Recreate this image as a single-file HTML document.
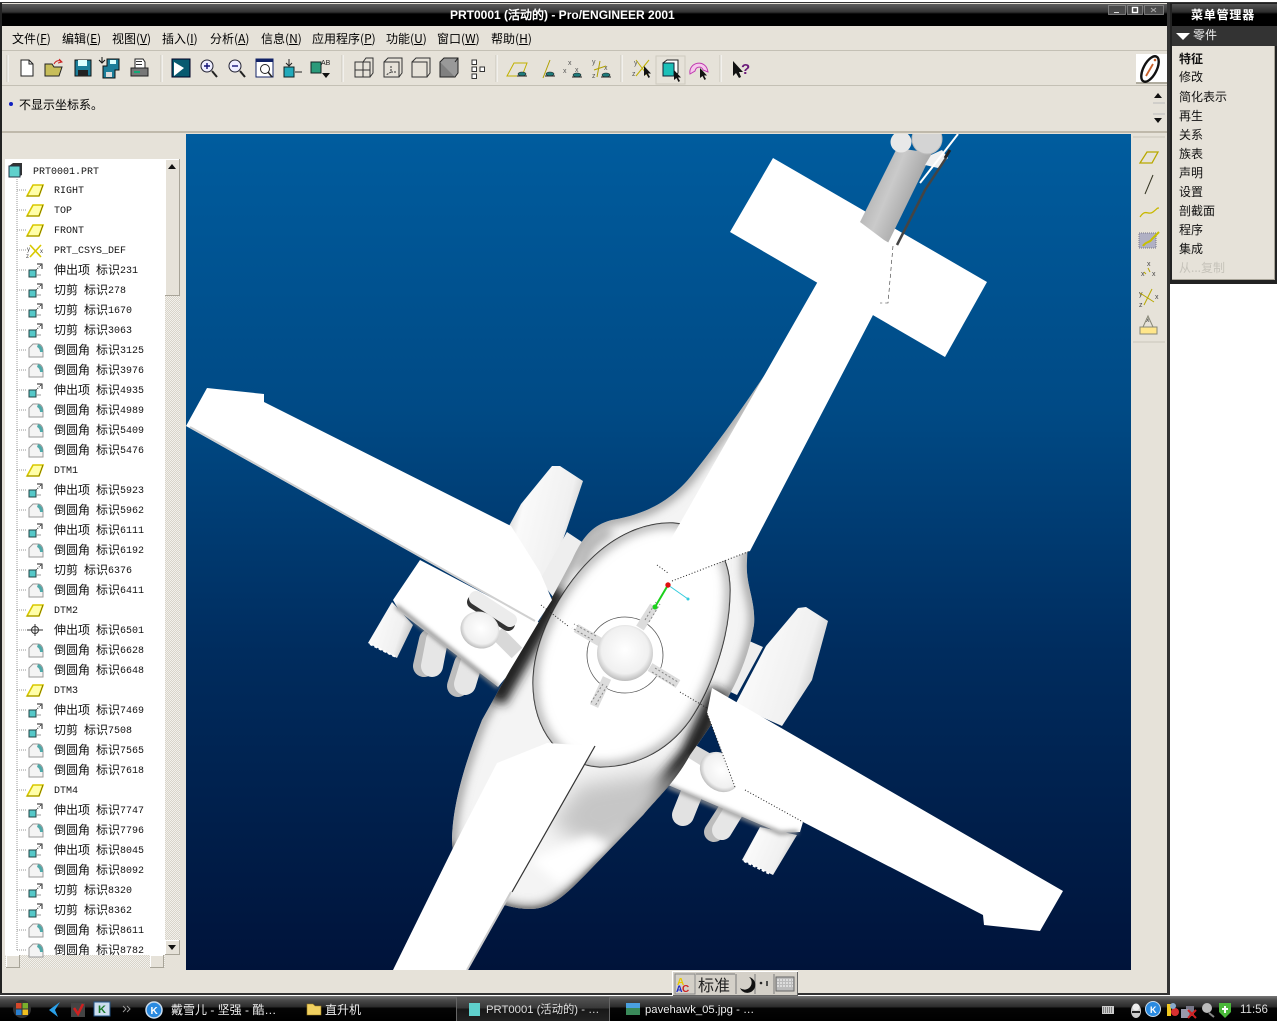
<!DOCTYPE html>
<html><head><meta charset="utf-8"><style>
html,body{margin:0;padding:0;background:#fff}
#p{position:relative;width:1277px;height:1021px;overflow:hidden;background:#fff;font-family:"WenQuanYi Zen Hei","Noto Sans CJK SC",sans-serif;font-size:12px;color:#000}
.a{position:absolute;white-space:nowrap;line-height:14px}
.a u{text-decoration:underline}
#tree{position:absolute;left:5px;top:159px;width:160px;height:796px;background:#fff;overflow:hidden}
.r{position:absolute;left:49px;height:20px;line-height:20px;white-space:nowrap;color:#111}
.r i{font:10px/20px "Liberation Mono",monospace;color:#111;position:relative;top:-1px;font-style:normal}
.m{position:absolute;left:1179px;line-height:14px;color:#111}
.w{color:#fff}
.l{font-family:"Liberation Sans","WenQuanYi Zen Hei",sans-serif}
</style></head><body><div id="p">
<div style="position:absolute;left:0;top:0;width:1277px;height:3px;background:#fff;border-bottom:1px solid #333;box-sizing:border-box"></div>
<div style="position:absolute;left:0;top:3px;width:1170px;height:993px;background:#e6e2d9"></div>
<div style="position:absolute;left:0;top:3px;width:2px;height:991px;background:#222"></div>
<div style="position:absolute;left:1167px;top:3px;width:3px;height:991px;background:#333"></div>
<div style="position:absolute;left:0;top:993px;width:1170px;height:2px;background:#333"></div>
<div style="position:absolute;left:2px;top:4px;width:1165px;height:22px;background:linear-gradient(#5e5e5e 0,#343434 8px,#000 10px,#000 100%)"></div>
<div class="a l w" style="left:450px;top:8px;font-weight:bold;font-size:12px">PRT0001 (活动的) - Pro/ENGINEER 2001</div>
<div style="position:absolute;left:2px;top:50px;width:1165px;height:1px;background:#c4c0b5"></div>
<div style="position:absolute;left:2px;top:85px;width:1165px;height:1px;background:#c4c0b5"></div>
<div style="position:absolute;left:2px;top:131px;width:1165px;height:2px;background:#bfb9ab"></div>

<div class="a" style="left:12px;top:32px">文件(<u>F</u>)</div>
<div class="a" style="left:62px;top:32px">编辑(<u>E</u>)</div>
<div class="a" style="left:112px;top:32px">视图(<u>V</u>)</div>
<div class="a" style="left:162px;top:32px">插入(<u>I</u>)</div>
<div class="a" style="left:210px;top:32px">分析(<u>A</u>)</div>
<div class="a" style="left:261px;top:32px">信息(<u>N</u>)</div>
<div class="a" style="left:312px;top:32px">应用程序(<u>P</u>)</div>
<div class="a" style="left:386px;top:32px">功能(<u>U</u>)</div>
<div class="a" style="left:437px;top:32px">窗口(<u>W</u>)</div>
<div class="a" style="left:491px;top:32px">帮助(<u>H</u>)</div>
<div class="a" style="left:19px;top:98px">不显示坐标系。</div>

<!-- viewport -->
<svg style="position:absolute;left:186px;top:134px" width="945" height="836" viewBox="186 134 945 836">
<defs>
<linearGradient id="bg" x1="0" y1="0" x2="0" y2="1"><stop offset="0" stop-color="#005c9e"/><stop offset=".33" stop-color="#004a85"/><stop offset=".62" stop-color="#002c5e"/><stop offset="1" stop-color="#00133a"/></linearGradient>
<filter id="b2" x="-30%" y="-30%" width="160%" height="160%"><feGaussianBlur stdDeviation="2"/></filter>
<filter id="b5" x="-30%" y="-30%" width="160%" height="160%"><feGaussianBlur stdDeviation="5"/></filter>
<filter id="b9" x="-40%" y="-40%" width="180%" height="180%"><feGaussianBlur stdDeviation="10"/></filter>
<linearGradient id="eng" x1="0" y1="0" x2="1" y2=".4"><stop offset="0" stop-color="#b4b4b4"/><stop offset=".28" stop-color="#fafafa"/><stop offset=".8" stop-color="#f0f0f0"/><stop offset="1" stop-color="#c8c8c8"/></linearGradient>
<linearGradient id="shaft" x1="0" y1="0" x2="1" y2=".55"><stop offset="0" stop-color="#9a9a9a"/><stop offset=".5" stop-color="#cacaca"/><stop offset="1" stop-color="#909090"/></linearGradient>
<radialGradient id="ball" cx=".5" cy=".45" r=".6"><stop offset="0" stop-color="#fff"/><stop offset=".7" stop-color="#f0f0f0"/><stop offset="1" stop-color="#a8a8a8"/></radialGradient>
<path id="fus" d="M778 355C745 405 720 440 692 475C668 505 640 515 612 520C592 525 582 538 572 560L540 620L510 670L482 720C462 770 452 810 452 842C454 880 490 909 530 909C552 909 567 893 585 875L643 815C660 795 675 782 690 755C715 720 745 680 754 625C756 600 745 585 747 560C748 520 760 450 778 355Z"/>
<path id="ov" d="M673 523C705 525 730 550 730 590C730 640 710 690 690 720C665 755 630 767 600 767C560 765 533 730 533 683C533 640 560 590 590 560C615 535 645 522 673 523Z"/>
<clipPath id="fc"><use href="#fus"/></clipPath>
<clipPath id="oc"><use href="#ov"/></clipPath>
</defs>
<rect x="186" y="134" width="945" height="836" fill="url(#bg)"/>

<!-- tail shaft, strut -->
<polygon points="773,158 987,282 945,357 730,232" fill="#fff"/>
<polygon points="897,148 932,153 888,243 860,222" fill="url(#shaft)"/>
<circle cx="901" cy="142" r="10.500" fill="#e8e8e8"/>
<circle cx="927" cy="139" r="15" fill="#d4d4d4" stroke="#bbb"/>
<polygon points="931,155 942,150 948,158 938,168 925,165" fill="#f0f0f0"/>
<path d="M897 245L925 190L946 158" stroke="#444" stroke-width="2.500" fill="none"/>
<path d="M920 183L958 134" stroke="#fff" stroke-width="2" fill="none"/>
<path d="M945 158L950 150" stroke="#222" stroke-width="3"/>

<!-- left wing group -->
<polygon points="509,526 521,504 552,466 560,466 583,481 566,531 545,590" fill="url(#eng)"/>
<polygon points="567,532 582,542 553,597 540,580" fill="#eee"/>
<polygon points="392,602 413,625 397,658 368,643" fill="url(#eng)"/>
<g fill="none" stroke-linecap="round">
<path d="M430 640L424 666" stroke="#bdbdbd" stroke-width="22"/><path d="M437 640L432 666" stroke="#e6e6e6" stroke-width="22"/>
<path d="M465 664L458 686" stroke="#bdbdbd" stroke-width="22"/><path d="M471 664L465 684" stroke="#e6e6e6" stroke-width="22"/>
</g>
<polygon points="420,560 393,600 400,612 498,687 512,670 540,623" fill="#fff"/>
<path d="M396 606L498 687" stroke="#8a8a8a" stroke-width="4" filter="url(#b2)"/>
<path d="M497 633L517 653" stroke="#d8d8d8" stroke-width="15"/>
<path d="M474 602L508 624" stroke="#333" stroke-width="14" stroke-linecap="round"/>
<path d="M476 598L510 620" stroke="#ececec" stroke-width="14" stroke-linecap="round"/>
<ellipse cx="480" cy="630" rx="20" ry="18" transform="rotate(30 480 630)" fill="url(#ball)"/>

<!-- right wing group -->
<polygon points="766,646 798,608 806,607 828,621 812,680 782,726 735,705" fill="url(#eng)"/>
<polygon points="747,640 763,647 737,695 722,688" fill="#eee"/>
<polygon points="760,827 797,835 773,875 742,860" fill="url(#eng)"/>
<g fill="none" stroke-linecap="round">
<path d="M691 795L683 815" stroke="#e2e2e2" stroke-width="22"/>
<path d="M727 812L714 832" stroke="#bdbdbd" stroke-width="20"/><path d="M733 812L722 830" stroke="#e6e6e6" stroke-width="20"/>
</g>
<polygon points="690,745 735,780 803,822 800,832 780,833 668,785" fill="#fff"/>
<path d="M668 786L780 833L798 832" stroke="#999" stroke-width="4" fill="none" filter="url(#b2)"/>
<polygon points="690,742 713,755 708,770 684,755" fill="#d8d8d8"/>
<ellipse cx="720" cy="772" rx="22" ry="18" transform="rotate(45 720 772)" fill="url(#ball)"/>

<!-- fuselage -->
<use href="#fus" fill="#f4f4f4"/>
<g clip-path="url(#fc)">
<use href="#fus" fill="none" stroke="#8a8a8a" stroke-width="8" filter="url(#b5)"/>
<path d="M558 590L495 700" stroke="#222" stroke-width="22" fill="none" filter="url(#b5)"/>
<path d="M720 690L690 755L630 825" stroke="#222" stroke-width="20" fill="none" filter="url(#b5)"/>
<path d="M452 842C454 880 490 909 530 909C552 909 567 893 585 875L643 815L690 755" fill="none" stroke="#555" stroke-width="3" filter="url(#b2)"/>
<polygon points="580,785 675,770 650,825 600,850 550,825" fill="#c6c6c6" filter="url(#b9)"/>
<polygon points="530,860 590,835 610,845 560,885" fill="#fff" filter="url(#b5)"/>
<path d="M610 530L590 545L580 570" stroke="#aaa" stroke-width="10" fill="none" filter="url(#b5)"/>
</g>
<use href="#ov" fill="#fff" stroke="#222" stroke-width="1.200"/>
<g clip-path="url(#oc)"><use href="#ov" fill="none" stroke="#aaa" stroke-width="9" filter="url(#b5)"/></g>

<!-- boom -->
<polygon points="853,223 893,245 888,303 873,315 750,551 672,580 667,572 655,567 817,283" fill="#fff"/>
<path d="M893 246L888 303L880 303" stroke="#333" stroke-width=".6" stroke-dasharray="4 3" fill="none"/>

<!-- hub -->
<circle cx="625" cy="655" r="38" fill="none" stroke="#555" stroke-width=".8"/>
<g stroke="#dcdcdc" stroke-width="9" fill="none"><path d="M640 628L654 606"/><path d="M650 667L678 684"/><path d="M607 678L594 706"/><path d="M600 642L576 628"/></g>
<g stroke="#888" stroke-width="1" stroke-dasharray="2 2" fill="none"><path d="M645 620L656 602M649 622L660 604"/><path d="M655 668L678 682M652 672L675 686"/><path d="M603 684L590 704M607 686L595 706"/><path d="M596 636L574 624M593 640L572 628"/></g>
<circle cx="625" cy="653" r="28" fill="url(#ball)"/>
<path d="M668 585L655 607" stroke="#1bd01b" stroke-width="2"/><circle cx="655" cy="607" r="2.500" fill="#1bd01b"/>
<path d="M668 585L688 599" stroke="#3cd" stroke-width="1"/><circle cx="688" cy="599" r="1.500" fill="#3cd"/>
<circle cx="668" cy="585" r="2.700" fill="#e01010"/>

<!-- blades -->
<polygon points="186,426 207,388 264,394 264,402 511,526 540,572 552,600 537,623" fill="#fff"/>
<path d="M190 427L535 621" stroke="#d0d0d0" stroke-width="2"/>
<polygon points="712,688 1063,891 1040,931 984,925 983,915 803,822 735,787 707,713" fill="#fff"/>
<polygon points="393,970 453,848 497,763 547,743 595,746 467,970" fill="#fff"/>
<path d="M595 746L512 892" stroke="#333" stroke-width="1.200"/>
<path d="M511 892L467 970" stroke="#ccc" stroke-width="2"/>
<g stroke="#222" stroke-width="1" stroke-dasharray="1 2" fill="none">
<path d="M541 605L568 626"/><path d="M680 692L707 708"/><path d="M707 713L735 787"/><path d="M745 790L803 822"/><path d="M672 581L750 551"/><path d="M657 565L668 573"/></g>
<path d="M370 644L396 657" stroke="#fff" stroke-width="2" stroke-dasharray="3 2"/>
<path d="M744 861L770 874" stroke="#fff" stroke-width="2" stroke-dasharray="3 2"/>
</svg>

<!-- tree -->
<div id="tree">
<div class="r" style="left:28px;top:2px"><i>PRT0001.PRT</i></div>
<div class="r" style="top:21px"><i>RIGHT</i></div>
<div class="r" style="top:41px"><i>TOP</i></div>
<div class="r" style="top:61px"><i>FRONT</i></div>
<div class="r" style="top:81px"><i>PRT_CSYS_DEF</i></div>
<div class="r" style="top:101px">伸出项<i>&nbsp;</i>标识<i>231</i></div>
<div class="r" style="top:121px">切剪<i>&nbsp;</i>标识<i>278</i></div>
<div class="r" style="top:141px">切剪<i>&nbsp;</i>标识<i>1670</i></div>
<div class="r" style="top:161px">切剪<i>&nbsp;</i>标识<i>3063</i></div>
<div class="r" style="top:181px">倒圆角<i>&nbsp;</i>标识<i>3125</i></div>
<div class="r" style="top:201px">倒圆角<i>&nbsp;</i>标识<i>3976</i></div>
<div class="r" style="top:221px">伸出项<i>&nbsp;</i>标识<i>4935</i></div>
<div class="r" style="top:241px">倒圆角<i>&nbsp;</i>标识<i>4989</i></div>
<div class="r" style="top:261px">倒圆角<i>&nbsp;</i>标识<i>5409</i></div>
<div class="r" style="top:281px">倒圆角<i>&nbsp;</i>标识<i>5476</i></div>
<div class="r" style="top:301px"><i>DTM1</i></div>
<div class="r" style="top:321px">伸出项<i>&nbsp;</i>标识<i>5923</i></div>
<div class="r" style="top:341px">倒圆角<i>&nbsp;</i>标识<i>5962</i></div>
<div class="r" style="top:361px">伸出项<i>&nbsp;</i>标识<i>6111</i></div>
<div class="r" style="top:381px">倒圆角<i>&nbsp;</i>标识<i>6192</i></div>
<div class="r" style="top:401px">切剪<i>&nbsp;</i>标识<i>6376</i></div>
<div class="r" style="top:421px">倒圆角<i>&nbsp;</i>标识<i>6411</i></div>
<div class="r" style="top:441px"><i>DTM2</i></div>
<div class="r" style="top:461px">伸出项<i>&nbsp;</i>标识<i>6501</i></div>
<div class="r" style="top:481px">倒圆角<i>&nbsp;</i>标识<i>6628</i></div>
<div class="r" style="top:501px">倒圆角<i>&nbsp;</i>标识<i>6648</i></div>
<div class="r" style="top:521px"><i>DTM3</i></div>
<div class="r" style="top:541px">伸出项<i>&nbsp;</i>标识<i>7469</i></div>
<div class="r" style="top:561px">切剪<i>&nbsp;</i>标识<i>7508</i></div>
<div class="r" style="top:581px">倒圆角<i>&nbsp;</i>标识<i>7565</i></div>
<div class="r" style="top:601px">倒圆角<i>&nbsp;</i>标识<i>7618</i></div>
<div class="r" style="top:621px"><i>DTM4</i></div>
<div class="r" style="top:641px">伸出项<i>&nbsp;</i>标识<i>7747</i></div>
<div class="r" style="top:661px">倒圆角<i>&nbsp;</i>标识<i>7796</i></div>
<div class="r" style="top:681px">伸出项<i>&nbsp;</i>标识<i>8045</i></div>
<div class="r" style="top:701px">倒圆角<i>&nbsp;</i>标识<i>8092</i></div>
<div class="r" style="top:721px">切剪<i>&nbsp;</i>标识<i>8320</i></div>
<div class="r" style="top:741px">切剪<i>&nbsp;</i>标识<i>8362</i></div>
<div class="r" style="top:761px">倒圆角<i>&nbsp;</i>标识<i>8611</i></div>
<div class="r" style="top:781px">倒圆角<i>&nbsp;</i>标识<i>8782</i></div>
</div>
<!-- scrollbars -->
<div style="position:absolute;left:165px;top:159px;width:15px;height:796px;background:repeating-conic-gradient(#d8d4ca 0 25%,#f3f1ec 0 50%) 0 0/2px 2px"></div>
<div style="position:absolute;left:165px;top:159px;width:15px;height:137px;background:#e6e2d9;box-shadow:inset -1px -1px #a8a498,inset 1px 1px #fff"></div>
<div style="position:absolute;left:165px;top:940px;width:15px;height:15px;background:#e6e2d9;box-shadow:inset -1px -1px #a8a498,inset 1px 1px #fff"></div>
<div style="position:absolute;left:5px;top:955px;width:160px;height:13px;background:repeating-conic-gradient(#d8d4ca 0 25%,#f3f1ec 0 50%) 0 0/2px 2px"></div>
<div style="position:absolute;left:6px;top:955px;width:14px;height:13px;background:#e6e2d9;box-shadow:inset -1px -1px #a8a498,inset 1px 1px #fff"></div>
<div style="position:absolute;left:150px;top:955px;width:14px;height:13px;background:#e6e2d9;box-shadow:inset -1px -1px #a8a498,inset 1px 1px #fff"></div>

<!-- menu manager -->
<div style="position:absolute;left:1170px;top:3px;width:107px;height:281px;background:#222"></div>
<div style="position:absolute;left:1172px;top:4px;width:105px;height:22px;background:linear-gradient(#555 0,#2e2e2e 8px,#000 10px,#000 100%)"></div>
<div style="position:absolute;left:1172px;top:26px;width:105px;height:20px;background:#333"></div>
<div style="position:absolute;left:1172px;top:46px;width:103px;height:234px;background:#e6e2d9;box-shadow:inset -1px -1px #a8a498"></div>
<div class="a w" style="left:1191px;top:8px;font-size:12px;font-weight:bold;letter-spacing:.8px">菜单管理器</div>
<div class="a" style="left:1193px;top:28px;color:#eee">零件</div>
<div class="m" style="top:52px;font-weight:bold">特征</div>
<div class="m" style="top:70px">修改</div>
<div class="m" style="top:90px">简化表示</div>
<div class="m" style="top:109px">再生</div>
<div class="m" style="top:128px">关系</div>
<div class="m" style="top:147px">族表</div>
<div class="m" style="top:166px">声明</div>
<div class="m" style="top:185px">设置</div>
<div class="m" style="top:204px">剖截面</div>
<div class="m" style="top:223px">程序</div>
<div class="m" style="top:242px">集成</div>
<div class="m" style="top:261px;color:#c6c3ba">从...复制</div>

<!-- taskbar -->
<div style="position:absolute;left:0;top:995px;width:1277px;height:2px;background:#fff"></div>
<div style="position:absolute;left:0;top:996px;width:1277px;height:25px;background:linear-gradient(#777 0,#4a4a4a 4px,#2a2a2a 11px,#050505 12px,#000 100%)"></div>
<div style="position:absolute;left:456px;top:997px;width:154px;height:24px;background:linear-gradient(#555 0,#383838 11px,#181818 12px,#222 100%);border-left:1px solid #666;border-right:1px solid #666;box-sizing:border-box"></div>
<div class="a l" style="left:171px;top:1003px;color:#eee">戴雪儿 - 坚强 - 酷…</div>
<div class="a l" style="left:325px;top:1003px;color:#eee">直升机</div>
<div class="a l" style="left:486px;top:1003px;color:#ddd;font-size:11.3px">PRT0001 (活动的) - …</div>
<div class="a l" style="left:645px;top:1003px;color:#eee;font-size:11.3px">pavehawk_05.jpg - …</div>
<div class="a l" style="left:1240px;top:1003px;color:#ddd;font-size:11.5px">11:56</div>

<!-- IME -->
<div style="position:absolute;left:672px;top:971px;width:126px;height:25px;background:#d4d0c8;box-shadow:inset 1px 1px #fff,inset -1px -1px #666"></div>
<div class="a" style="left:698px;top:975px;font-size:16px;line-height:18px;color:#222">标准</div>

<!-- icons overlay -->
<svg style="position:absolute;left:0;top:0;pointer-events:none" width="1277" height="1021" viewBox="0 0 1277 1021">
<defs>
<symbol id="pl" overflow="visible"><polygon points="1,13 7,2 17,2 13,13" fill="#ffffa8" stroke="#d8c800" stroke-width="1.600"/><polyline points="1,13 13,13 17,2" fill="none" stroke="#5e5a00" stroke-width=".6"/></symbol>
<symbol id="ex" overflow="visible"><path d="M9 8L15 2" stroke="#222" stroke-dasharray="1 1"/><path d="M10 2H15V7" stroke="#222" fill="none"/><rect x="2" y="8" width="7" height="7" fill="#55c8c8" stroke="#244"/><path d="M9 13L14 13" stroke="#999"/></symbol>
<symbol id="ro" overflow="visible"><path d="M2 6L6 2H11C14 2 16 5 16 9V15H2Z" fill="#f4f4f4" stroke="#999"/><path d="M11 2C14 3 16 6 16 10L13 10C13 8 12 6 10 5Z" fill="#4fa8a8"/></symbol>
<symbol id="cs" overflow="visible"><path d="M4 2L15 14M15 2L4 14" stroke="#d8c800" stroke-width="1.600"/><text x="1" y="8" font-size="6" fill="#444" font-family="Liberation Sans">y</text><text x="0" y="15" font-size="6" fill="#444" font-family="Liberation Sans">z</text><text x="14" y="10" font-size="6" fill="#444" font-family="Liberation Sans">x</text></symbol>
<symbol id="cur" overflow="visible"><path d="M0 0V10L2.500 8L4.500 12L6 11L4 7.500H7Z" fill="#111"/></symbol>
<symbol id="pt" overflow="visible"><ellipse cx="0" cy="0" rx="4" ry="2" fill="#1f7a7a" stroke="#222" stroke-width=".6"/><path d="M-5 2H5" stroke="#222"/></symbol>
</defs>

<!-- window buttons -->
<g fill="#4a4a4a" stroke="#8a8a8a" stroke-width=".8"><rect x="1108.500" y="5.500" width="17" height="9"/><rect x="1127.500" y="5.500" width="15" height="9"/><rect x="1144.500" y="5.500" width="19" height="9"/></g>
<rect x="1114" y="12" width="5" height="1" fill="#ddd"/><rect x="1132.500" y="7.500" width="5" height="5" fill="none" stroke="#fff" stroke-width="1.400"/>
<path d="M1151 8L1156 12M1156 8L1151 12" stroke="#aaa"/>
<polygon points="1176,33 1190,33 1183,40" fill="#fff"/>

<!-- toolbar separators -->
<g stroke="#c9c5ba"><path d="M7 55V82M161 55V82M342 55V82M496 55V82M621 55V82M720 55V82"/></g>
<g stroke="#fff"><path d="M8 55V82M162 55V82M343 55V82M497 55V82M622 55V82M721 55V82"/></g>
<!-- tool icons -->
<path d="M21 60H29L33 64V76H21Z" fill="#fff" stroke="#222"/><path d="M29 60V64H33" fill="none" stroke="#222"/>
<path d="M45 64H52L54 67H62L59 76H45Z" fill="#c7bd5a" stroke="#222"/><path d="M54 64C56 60 60 60 61 62M59 59L62 62L58 63" stroke="#c22" fill="none"/>
<path d="M75 60H91V76H75Z" fill="#1c7e9a" stroke="#111"/><rect x="78" y="60" width="9" height="6" fill="#dff"/><rect x="78" y="70" width="10" height="6" fill="#222"/>
<path d="M107 59H119V70H115V78H103V66H107Z" fill="#1c7e9a" stroke="#111"/><rect x="110" y="60" width="6" height="4" fill="#dff"/><rect x="106" y="72" width="6" height="5" fill="#ddd"/><path d="M102 57V62M99 60L102 63L105 60" stroke="#111" fill="none"/>
<path d="M135 59H143L145 62V68H135Z" fill="#fff" stroke="#222"/><path d="M131 68H148V76H131Z" fill="#777" stroke="#222"/><rect x="134" y="71" width="6" height="2" fill="#1a7"/><rect x="136" y="61" width="6" height="1" fill="#333"/><rect x="136" y="64" width="6" height="1" fill="#333"/>
<rect x="172" y="59" width="18" height="18" fill="#085a70" stroke="#002"/><polygon points="174,62 184,68 174,76" fill="#fff"/>
<circle cx="207" cy="66" r="6" fill="#eef" stroke="#223"/><path d="M212 71L217 77" stroke="#222" stroke-width="2"/><path d="M204 66H210M207 63V69" stroke="#117" stroke-width="1.400"/>
<circle cx="235" cy="66" r="6" fill="#eef" stroke="#223"/><path d="M240 71L245 77" stroke="#222" stroke-width="2"/><path d="M232 66H238" stroke="#117" stroke-width="1.400"/>
<rect x="256" y="59" width="17" height="18" fill="#fff" stroke="#126"/><rect x="256" y="59" width="17" height="3" fill="#126"/><circle cx="265" cy="69" r="4.500" fill="none" stroke="#222"/><path d="M268 72L272 77" stroke="#222" stroke-width="1.500"/>
<rect x="284" y="67" width="10" height="10" fill="#2ab" stroke="#122"/><path d="M289 59V66M286 63L289 66L292 63M302 72H295" stroke="#222" fill="none"/>
<rect x="311" y="62" width="10" height="11" fill="#2a9a7a" stroke="#122"/><text x="321" y="65" font-size="7" font-family="Liberation Sans" fill="#222">AB</text><polygon points="322,73 330,73 326,78" fill="#111"/>
<g fill="none" stroke="#333"><path d="M355 62H370V77H355ZM355 70H370M363 62V77M363 62L366 58H373V73L370 77"/><path d="M384 62H399V77H384ZM384 62L388 58H402V73L399 77"/><path d="M391 66V72L386 75M391 72H396" stroke-dasharray="2 1"/><path d="M412 62H427V77H412ZM412 62L416 58H430V73L427 77"/></g>
<rect x="440" y="62" width="15" height="15" fill="#808080" stroke="#222"/><path d="M440 62L444 58H458V73L455 77M455 62L458 58" fill="#999" stroke="#222"/>
<g fill="#fff" stroke="#333"><rect x="472" y="60" width="4.500" height="4.500"/><rect x="472" y="67" width="4.500" height="4.500"/><rect x="472" y="74" width="4.500" height="4.500"/><rect x="480" y="67" width="4.500" height="4.500"/></g>
<path d="M507 76L514 63H527L522 76Z" fill="none" stroke="#c0b000"/><use href="#pt" x="522" y="74"/>
<path d="M543 78L550 60" stroke="#b0a000"/><use href="#pt" x="550" y="74"/>
<g font-family="Liberation Sans" font-size="7" fill="#555"><text x="568" y="65">x</text><text x="563" y="73">x</text><text x="575" y="72">x</text><text x="592" y="64">y</text><text x="604" y="70">x</text><text x="592" y="78">z</text></g>
<use href="#pt" x="577" y="75"/><use href="#pt" x="606" y="75"/><path d="M594 70L606 66M600 61L597 77" stroke="#b0a000"/>
<path d="M636 60L648 76M649 60L636 76" stroke="#c0b000"/><g font-family="Liberation Sans" font-size="7" fill="#555"><text x="634" y="65">y</text><text x="632" y="76">z</text></g><use href="#cur" x="644" y="66"/>
<rect x="656" y="56" width="29" height="28" fill="none" stroke="#cfcbc0"/><path d="M663 63L667 60H678V73L674 76H663Z" fill="#fff" stroke="#222"/><rect x="663" y="63" width="11" height="13" fill="#1cc0b8" stroke="#123"/><use href="#cur" x="674" y="70"/>
<path d="M690 74C688 62 706 58 708 72L703 70C702 66 696 66 695 71Z" fill="#f6c8ec" stroke="#c03ab0"/><use href="#cur" x="700" y="68"/>
<path d="M733 61V76L736 73L739 78L741 77L739 72H743Z" fill="#111"/><text x="741" y="74" font-size="15" font-weight="bold" font-family="Liberation Sans" fill="#6a1a7a">?</text>
<!-- logo -->
<rect x="1136" y="54" width="31" height="28" fill="#fff"/><path d="M1136 83H1167" stroke="#b0ac9f" stroke-width="2"/>
<ellipse cx="1150" cy="69" rx="6.500" ry="14" transform="rotate(28 1150 69)" fill="none" stroke="#111" stroke-width="2.400"/><path d="M1146 76L1153 64" stroke="#c8602a" stroke-width="1.800"/><circle cx="1155" cy="60" r="1.300" fill="#c8602a"/>
<!-- msg -->
<circle cx="11" cy="104" r="2" fill="#1020c0"/>
<polygon points="1154,98 1162,98 1158,93" fill="#111"/><polygon points="1154,118 1162,118 1158,123" fill="#111"/>
<path d="M1153 103H1165M1153 114H1165" stroke="#bbb"/>
<!-- right toolbar -->
<path d="M1133 137H1165M1133 342H1165" stroke="#c9c5ba"/>
<path d="M1140 163L1147 152H1158L1152 163Z" fill="none" stroke="#b8a800" stroke-width="1.300"/>
<path d="M1145 194L1153 175" stroke="#332" stroke-width="1"/>
<path d="M1140 217C1146 208 1148 216 1153 212S1157 208 1159 208" fill="none" stroke="#c8b800" stroke-width="1.300"/>
<rect x="1139" y="233" width="17" height="15" fill="#b0b0c4" stroke="#778" stroke-dasharray="1 1"/><path d="M1143 246C1146 241 1150 243 1152 239L1159 232" stroke="#c8c000" stroke-width="2" fill="none"/>
<g font-family="Liberation Sans" font-size="7" fill="#444"><text x="1147" y="266">x</text><text x="1141" y="276">x</text><text x="1152" y="276">x</text><text x="1139" y="296">y</text><text x="1155" y="299">x</text><text x="1139" y="307">z</text><text x="1146" y="322">x</text></g>
<path d="M1148 268L1150 272M1144 272L1146 274M1140 293L1154 302M1152 289L1144 305" stroke="#b8a800"/>
<rect x="1140" y="327" width="17" height="7" fill="#ffe68a" stroke="#887"/><path d="M1143 327L1148 316L1153 327" fill="none" stroke="#887"/>

<!-- scroll arrows -->
<polygon points="168,169 176,169 172,164" fill="#111"/><polygon points="168,945 176,945 172,950" fill="#111"/>

<!-- tree lines -->
<path d="M17 179V950" stroke="#999" stroke-dasharray="1 1"/>
<g stroke="#999" stroke-dasharray="1 1"><path d="M17 190H27M17 210H27M17 230H27M17 250H27M17 270H27M17 290H27M17 310H27M17 330H27M17 350H27M17 370H27M17 390H27M17 410H27M17 430H27M17 450H27M17 470H27M17 490H27M17 510H27M17 530H27M17 550H27M17 570H27M17 590H27M17 610H27M17 630H27M17 650H27M17 670H27M17 690H27M17 710H27M17 730H27M17 750H27M17 770H27M17 790H27M17 810H27M17 830H27M17 850H27M17 870H27M17 890H27M17 910H27M17 930H27M17 950H27"/></g>
<path d="M9 166L13 163H22V175L18 177H9Z" fill="#333"/><rect x="9" y="166" width="11" height="11" fill="#5fd0cc" stroke="#234"/>
<use href="#pl" x="26" y="183"/><use href="#pl" x="26" y="203"/><use href="#pl" x="26" y="223"/><use href="#cs" x="26" y="243"/>
<use href="#ex" x="27" y="262"/><use href="#ex" x="27" y="282"/><use href="#ex" x="27" y="302"/><use href="#ex" x="27" y="322"/>
<use href="#ro" x="27" y="342"/><use href="#ro" x="27" y="362"/><use href="#ex" x="27" y="382"/><use href="#ro" x="27" y="402"/><use href="#ro" x="27" y="422"/><use href="#ro" x="27" y="442"/>
<use href="#pl" x="26" y="463"/><use href="#ex" x="27" y="482"/><use href="#ro" x="27" y="502"/><use href="#ex" x="27" y="522"/><use href="#ro" x="27" y="542"/><use href="#ex" x="27" y="562"/><use href="#ro" x="27" y="582"/>
<use href="#pl" x="26" y="603"/><circle cx="35" cy="630" r="3.500" fill="#fff" stroke="#333"/><path d="M27 630H43M35 624V636" stroke="#333"/><use href="#ro" x="27" y="642"/><use href="#ro" x="27" y="662"/>
<use href="#pl" x="26" y="683"/><use href="#ex" x="27" y="702"/><use href="#ex" x="27" y="722"/><use href="#ro" x="27" y="742"/><use href="#ro" x="27" y="762"/>
<use href="#pl" x="26" y="783"/><use href="#ex" x="27" y="802"/><use href="#ro" x="27" y="822"/><use href="#ex" x="27" y="842"/><use href="#ro" x="27" y="862"/><use href="#ex" x="27" y="882"/><use href="#ex" x="27" y="902"/><use href="#ro" x="27" y="922"/><use href="#ro" x="27" y="942"/>

<!-- IME icons -->
<rect x="675" y="974" width="20" height="20" fill="#d4d0c8" stroke="#888"/>
<text x="677" y="985" font-size="10" font-weight="bold" fill="#e8c800" font-family="Liberation Sans">A</text><text x="682" y="992" font-size="10" font-weight="bold" fill="#c22" font-family="Liberation Sans">C</text><text x="676" y="992" font-size="9" font-weight="bold" fill="#1a2ac8" font-family="Liberation Sans">A</text>
<path d="M696 974H735M736 974V994M755 974V994M774 974V994" stroke="#777"/>
<path d="M749 977A8 8 0 1 1 740 988A7 7 0 0 0 749 977Z" fill="#111"/>
<circle cx="761" cy="983" r="1.300" fill="#222"/><path d="M767 981V986" stroke="#222" stroke-width="1.500"/>
<rect x="776" y="977" width="18" height="14" fill="#bbb" stroke="#666"/><path d="M777 980H793M777 983H793M777 986H793" stroke="#fff" stroke-dasharray="2 1"/>

<!-- taskbar icons -->
<circle cx="22" cy="1009" r="9" fill="#333"/><g><rect x="16" y="1003" width="5.500" height="5.500" fill="#d5482a"/><rect x="22.500" y="1003" width="5.500" height="5.500" fill="#7ab02c"/><rect x="16" y="1009.500" width="5.500" height="5.500" fill="#2a80d0"/><rect x="22.500" y="1009.500" width="5.500" height="5.500" fill="#f0c020"/></g>
<path d="M60 1002L49 1010L58 1017L55 1010Z" fill="#2aa0e8"/>
<rect x="71" y="1003" width="14" height="14" fill="#444"/><path d="M74 1008L78 1014L83 1004" stroke="#d02020" stroke-width="2.500" fill="none"/>
<rect x="94" y="1002" width="16" height="14" fill="#cde" stroke="#258"/><text x="98" y="1013" font-size="11" font-weight="bold" fill="#1a7a2a" font-family="Liberation Sans">K</text>
<path d="M123 1006L126 1009L123 1012M127 1006L130 1009L127 1012" fill="none" stroke="#999"/>
<circle cx="154" cy="1010" r="8" fill="#2a8ae0" stroke="#cde" stroke-width="1.500"/><text x="150.500" y="1014" font-size="10" font-weight="bold" fill="#fff" font-family="Liberation Sans">K</text>
<path d="M307 1004H313L315 1006H321V1015H307Z" fill="#f0d060" stroke="#a08020" stroke-width=".6"/>
<rect x="469" y="1003" width="11" height="13" fill="#5fd0cc"/>
<rect x="626" y="1003" width="14" height="12" fill="#3a8a5a"/><rect x="626" y="1003" width="14" height="5" fill="#4aa0e0"/>
<rect x="1102" y="1006" width="12" height="8" fill="#ccc"/><path d="M1103 1008H1113M1103 1010H1113M1103 1012H1113" stroke="#333" stroke-dasharray="1 1"/>
<ellipse cx="1136" cy="1011" rx="5" ry="7" fill="#ccc"/><circle cx="1136" cy="1007" r="3.500" fill="#eee"/><path d="M1132 1012H1140" stroke="#222" stroke-width="2"/>
<circle cx="1153" cy="1009" r="7.500" fill="#2a8ae0" stroke="#cde"/><text x="1150" y="1013" font-size="9" font-weight="bold" fill="#fff" font-family="Liberation Sans">K</text>
<rect x="1167" y="1004" width="4" height="12" fill="#f0c820"/><circle cx="1175" cy="1012" r="4" fill="#d83030"/><circle cx="1173" cy="1006" r="3" fill="#8ac"/>
<rect x="1186" y="1006" width="8" height="10" fill="#778"/><rect x="1181" y="1009" width="8" height="9" fill="#99a"/><path d="M1188 1010L1196 1018M1196 1010L1188 1018" stroke="#d02020" stroke-width="2"/>
<circle cx="1207" cy="1008" r="5" fill="#bbb"/><path d="M1209 1013L1214 1017" stroke="#888" stroke-width="2"/>
<path d="M1219 1003H1231V1012L1225 1018L1219 1012Z" fill="#4ab83a"/><path d="M1225 1006V1013M1222 1009H1228" stroke="#fff" stroke-width="2"/>
</svg>
</div></body></html>
